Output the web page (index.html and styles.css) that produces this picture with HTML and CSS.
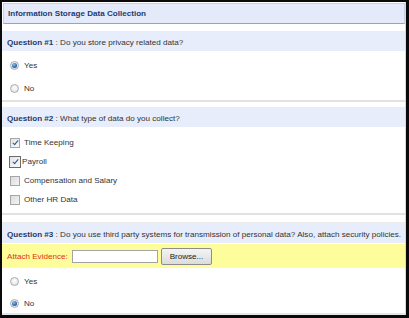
FILE: index.html
```html
<!DOCTYPE html>
<html>
<head>
<meta charset="utf-8">
<link rel="stylesheet" href="styles.css">
</head>
<body>
<div class="panel">
  <div class="title">Information Storage Data Collection</div>

  <div class="section s1">
    <div class="qbar"><b>Question #1</b> : Do you store privacy related data?</div>
    <div class="opt r1"><span class="radio on"></span><span class="lbl">Yes</span></div>
    <div class="opt r2"><span class="radio"></span><span class="lbl">No</span></div>
  </div>

  <div class="section s2">
    <div class="qbar"><b>Question #2</b> : What type of data do you collect?</div>
    <div class="copt c1"><span class="cb on"></span><span class="lbl">Time Keeping</span></div>
    <div class="copt c2"><span class="cb on focus"></span><span class="lbl tight">Payroll</span></div>
    <div class="copt c3"><span class="cb"></span><span class="lbl">Compensation and Salary</span></div>
    <div class="copt c4"><span class="cb"></span><span class="lbl">Other HR Data</span></div>
  </div>

  <div class="section s3">
    <div class="qbar q3"><b>Question #3</b> : Do you use third party systems for transmission of personal data? Also, attach security policies.</div>
    <div class="attach"><span class="alabel">Attach Evidence:</span><span class="file"></span><span class="browse">Browse...</span></div>
    <div class="opt r3"><span class="radio"></span><span class="lbl">Yes</span></div>
    <div class="opt r4"><span class="radio on"></span><span class="lbl">No</span></div>
  </div>
</div>
</body>
</html>
```

FILE: styles.css
```css
html, body {
  margin: 0;
  padding: 0;
  background: #0a0a0a;
}
body {
  width: 409px;
  height: 318px;
  overflow: hidden;
  font-family: "Liberation Sans", Arial, sans-serif;
  font-size: 8.1px;
  color: #3a3a3a;
}
.panel {
  margin: 2px 3px 0 2px;
  height: 313px;
  background: #fff;
  border-right: 1px solid #d8d8d8;
  box-sizing: border-box;
  display: flex;
  flex-direction: column;
}
.panel > *, .section > * {
  flex-shrink: 0;
}
.title {
  margin: 1px 0 0 1px;
  height: 21px;
  box-sizing: border-box;
  background: #e4eaf9;
  border: 1px solid #c9d1e6;
  border-bottom: 1px solid #9aa3b6;
  color: #1d3a70;
  font-weight: bold;
  display: flex;
  align-items: center;
  padding-left: 4px;
}
.section {
  display: flex;
  flex-direction: column;
  border-bottom: 2px solid #e2e2e2;
  border-top: 1px solid #ececec;
}
.s1 { margin-top: 7px; }
.s2 { margin-top: 5px; }
.s3 { margin-top: 7px; border-bottom: 2px solid #e6e6e6; }
.qbar {
  height: 19px;
  box-sizing: border-box;
  padding-top: 2px;
  background: #e7edfa;
  color: #333;
  display: flex;
  align-items: center;
  padding-left: 5px;
  white-space: pre;
}
.q3 { height: 20px; }
.qbar b {
  color: #1d3a70;
}
.opt {
  display: flex;
  align-items: center;
  height: 23px;
  padding-left: 8px;
}
.r1 { margin-top: 3px; }
.r3 { margin-top: 2px; }
.r4 { height: 20px; }
.radio {
  width: 9px;
  height: 9px;
  border-radius: 50%;
  box-sizing: border-box;
  border: 1px solid #a9acb0;
  background: radial-gradient(circle at 50% 40%, #ffffff 0%, #eaeaea 60%, #d6d6d6 100%);
  position: relative;
  margin-right: 5px;
}
.radio.on::after {
  content: "";
  position: absolute;
  left: 1px;
  top: 1px;
  width: 5px;
  height: 5px;
  border-radius: 50%;
  background: radial-gradient(circle at 40% 35%, #8fc4f2 0%, #2b6db3 55%, #1a3f74 100%);
}
.lbl { color: #333; }
.copt {
  display: flex;
  align-items: center;
  height: 19px;
  padding-left: 8px;
}
.c1 { margin-top: 6px; }
.c4 { margin-bottom: 4px; }
.cb {
  width: 10px;
  height: 10px;
  box-sizing: border-box;
  border: 1px solid #a6a6a6;
  background: linear-gradient(135deg, #dcdcdc 0%, #f4f4f4 100%);
  margin-right: 4px;
  position: relative;
}
.cb.on {
  background: linear-gradient(135deg, #e4e4e4 0%, #fafafa 100%);
}
.cb.on::after {
  content: "";
  position: absolute;
  left: 3px;
  top: 0px;
  width: 2px;
  height: 5px;
  border: solid #2a4f96;
  border-width: 0 1.5px 1.5px 0;
  transform: rotate(40deg);
}
.cb.focus {
  width: 12px;
  height: 12px;
  margin-left: -1px;
  border: 1px solid #6b6b6b;
  margin-right: 1px;
}
.cb.focus::after {
  left: 4px;
  top: 1px;
}
.attach {
  height: 24px;
  margin-top: 1px;
  background: #fdfd9c;
  display: flex;
  align-items: center;
  padding-left: 5px;
}
.alabel {
  color: #e0320c;
  width: 65px;
}
.file {
  width: 86px;
  height: 13px;
  box-sizing: border-box;
  background: #fff;
  border: 1px solid #a3a3a3;
  margin-right: 3px;
}
.browse {
  width: 51px;
  height: 17px;
  box-sizing: border-box;
  border: 1px solid #8c8c8c;
  border-radius: 2px;
  background: linear-gradient(#f4f4f4, #dcdcdc);
  display: flex;
  align-items: center;
  justify-content: center;
  color: #222;
}
```
